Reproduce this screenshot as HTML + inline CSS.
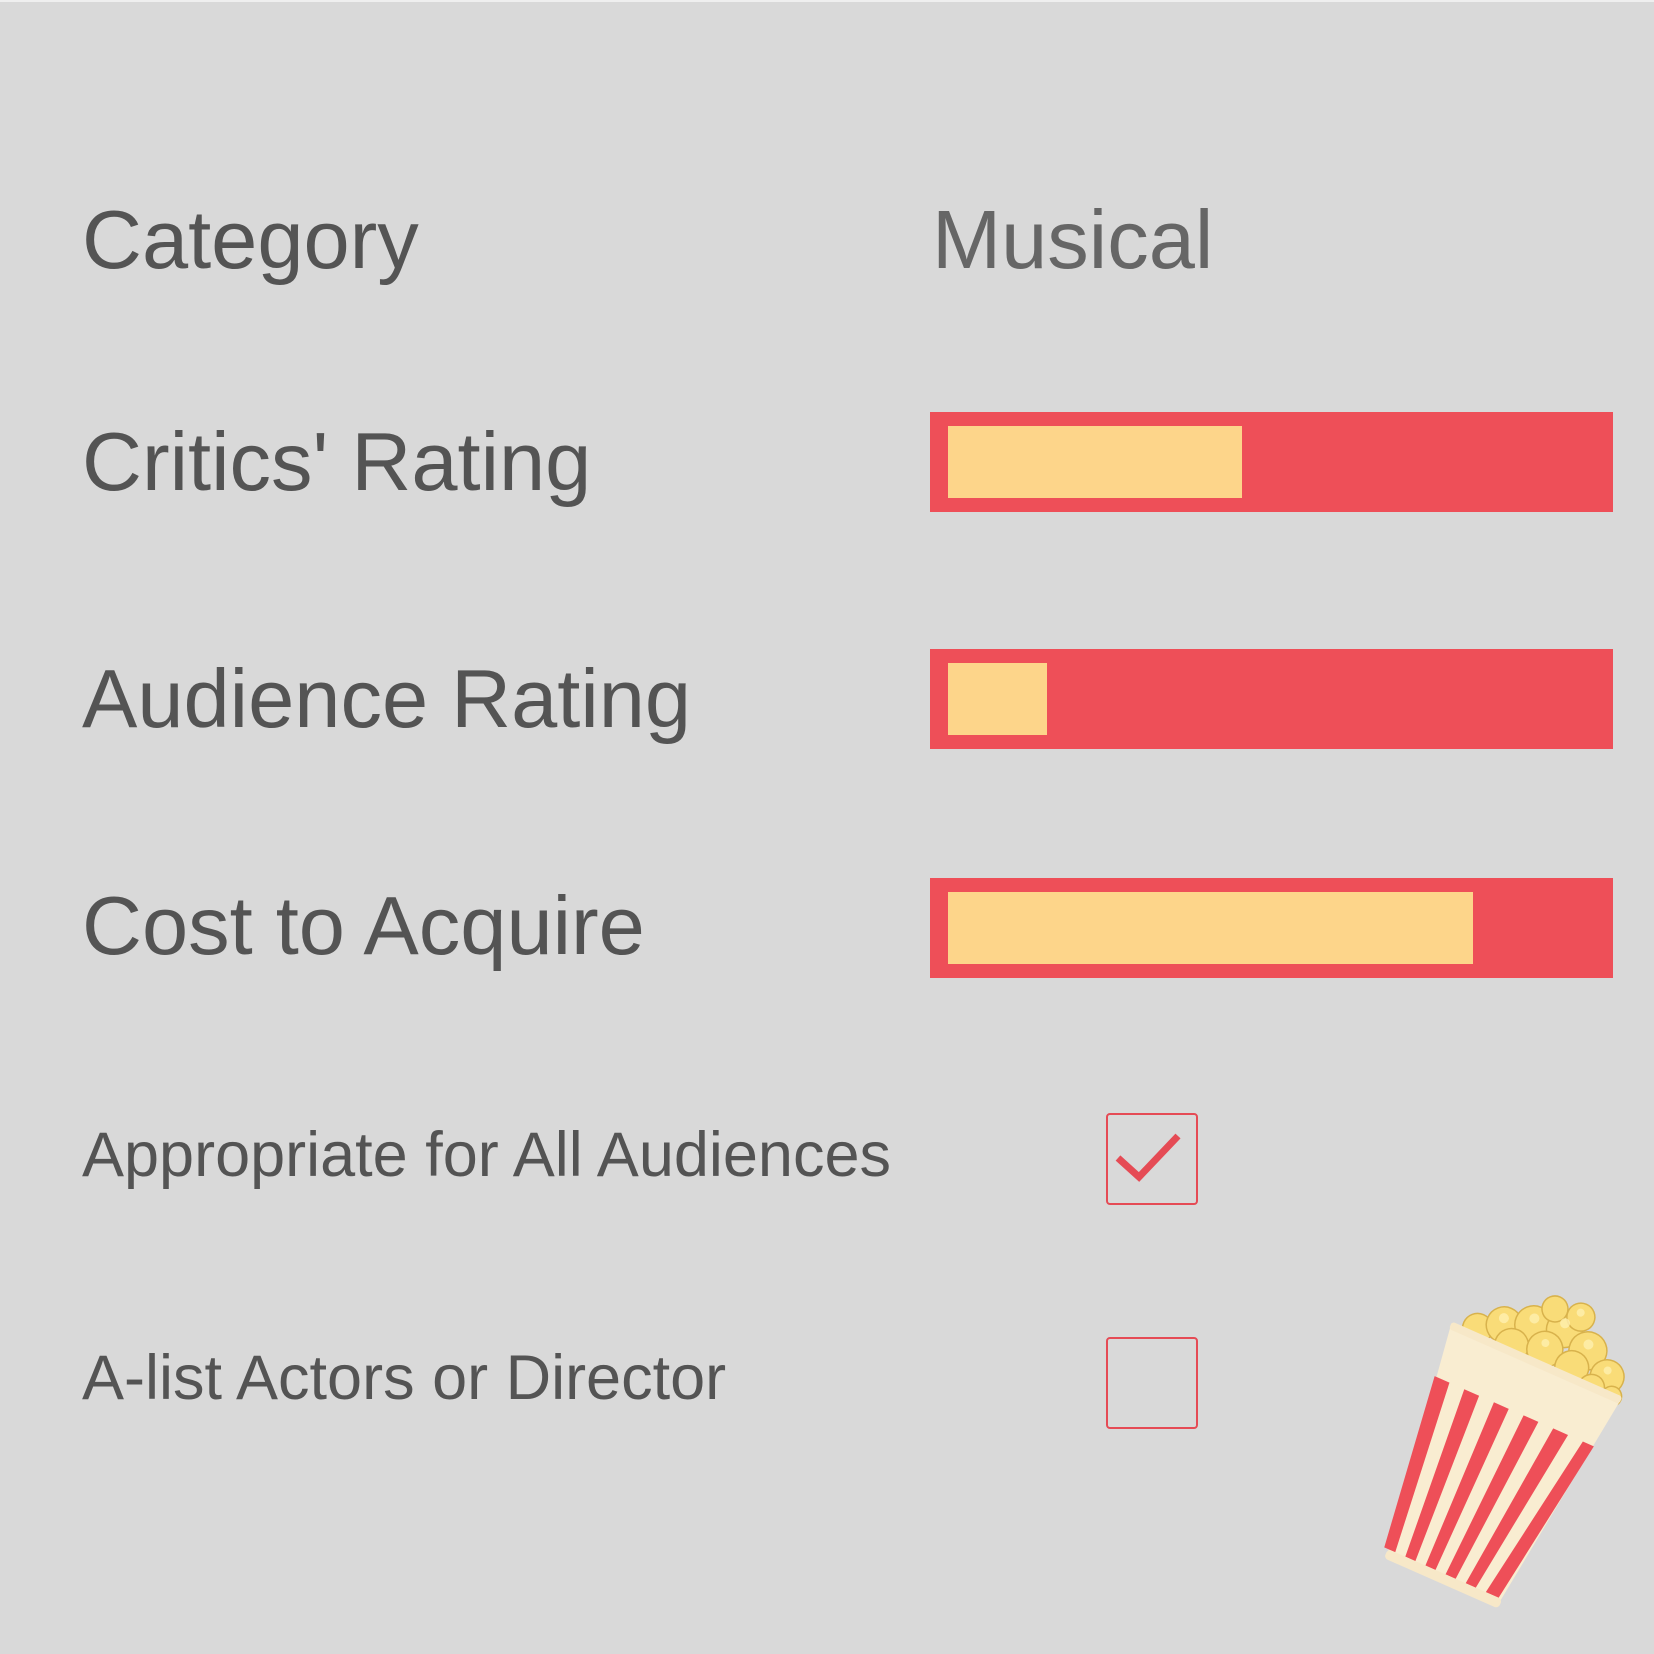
<!DOCTYPE html>
<html><head><meta charset="utf-8"><style>
html,body{margin:0;padding:0}
body{width:1654px;height:1654px;background:#d9d9d9;position:relative;overflow:hidden;font-family:"Liberation Sans",sans-serif;color:#545454}
.topline{position:absolute;left:0;top:0;width:1654px;height:2px;background:#efefef}
.t{position:absolute;left:82px;white-space:nowrap;line-height:1}
.big{font-size:83px}
.sm{font-size:63px}
.bar{position:absolute;left:930px;width:683px;height:100px;background:#ee4f58}
.fill{position:absolute;left:18px;top:14px;height:72px;background:#fdd58a}
.cb{position:absolute;left:1106px;width:92px;height:92px;border:2.5px solid #e54b55;border-radius:4px;box-sizing:border-box}
</style></head><body>
<div class="topline"></div>
<div class="t big" style="top:198px">Category</div>
<div class="t big" style="top:198px;left:932px;color:#666">Musical</div>
<div class="t big" style="top:420px">Critics' Rating</div>
<div class="t big" style="top:657px">Audience Rating</div>
<div class="t big" style="top:884px">Cost to Acquire</div>
<div class="t sm" style="top:1124px">Appropriate for All Audiences</div>
<div class="t sm" style="top:1347px">A-list Actors or Director</div>

<div class="bar" style="top:412px"><div class="fill" style="width:294px"></div></div>
<div class="bar" style="top:649px"><div class="fill" style="width:99px"></div></div>
<div class="bar" style="top:878px"><div class="fill" style="width:525px"></div></div>

<div class="cb" style="top:1113px">
<svg width="88" height="88" viewBox="0 0 88 88" style="position:absolute;left:0;top:0"><path d="M10 43 L31 62 L70 21" fill="none" stroke="#e54b55" stroke-width="7"/></svg>
</div>
<div class="cb" style="top:1337px"></div>

<svg width="1654" height="1654" style="position:absolute;left:0;top:0">
<g transform="translate(1455,1325) rotate(23.8)">
  <g fill="#f9dc78" stroke="#d8b24c" stroke-width="1.5">
    <circle cx="22" cy="-6" r="15"/><circle cx="45" cy="-20" r="18"/><circle cx="72" cy="-32" r="19"/>
    <circle cx="102" cy="-40" r="18"/><circle cx="132" cy="-30" r="19"/><circle cx="160" cy="-14" r="17"/>
    <circle cx="60" cy="-4" r="17"/><circle cx="92" cy="-14" r="18"/><circle cx="124" cy="-8" r="17"/>
    <circle cx="112" cy="-58" r="14"/><circle cx="85" cy="-55" r="13"/><circle cx="150" cy="2" r="13"/>
    <circle cx="172" cy="2" r="10"/>
  </g>
  <g fill="#fff0b0" opacity="0.8">
    <circle cx="42" cy="-26" r="5"/><circle cx="70" cy="-38" r="5"/><circle cx="100" cy="-46" r="5"/><circle cx="130" cy="-36" r="5"/><circle cx="110" cy="-62" r="4"/><circle cx="90" cy="-20" r="4"/><circle cx="158" cy="-20" r="4"/>
  </g>
  <polygon points="-4,0 182,0 152,240 31,240" fill="#f9edd1"/>
  <rect x="-4" y="-2" width="186" height="8" rx="3" fill="#f7e8c8"/>
  <g fill="#ee4f58">
    <polygon points="2,55 18.2,55 37,232 25,232"/>
    <polygon points="34.4,55 50.6,55 59,232 48,232"/>
    <polygon points="66.8,55 83,55 81,232 70,232"/>
    <polygon points="99.2,55 115.4,55 103,232 92,232"/>
    <polygon points="131.6,55 147.8,55 125,232 114,232"/>
    <polygon points="164,55 176,55 150,232 136,232"/>
  </g>
  <rect x="29" y="232" width="125" height="10" rx="4" fill="#f7e8c8"/>
</g>
</svg>
</body></html>
